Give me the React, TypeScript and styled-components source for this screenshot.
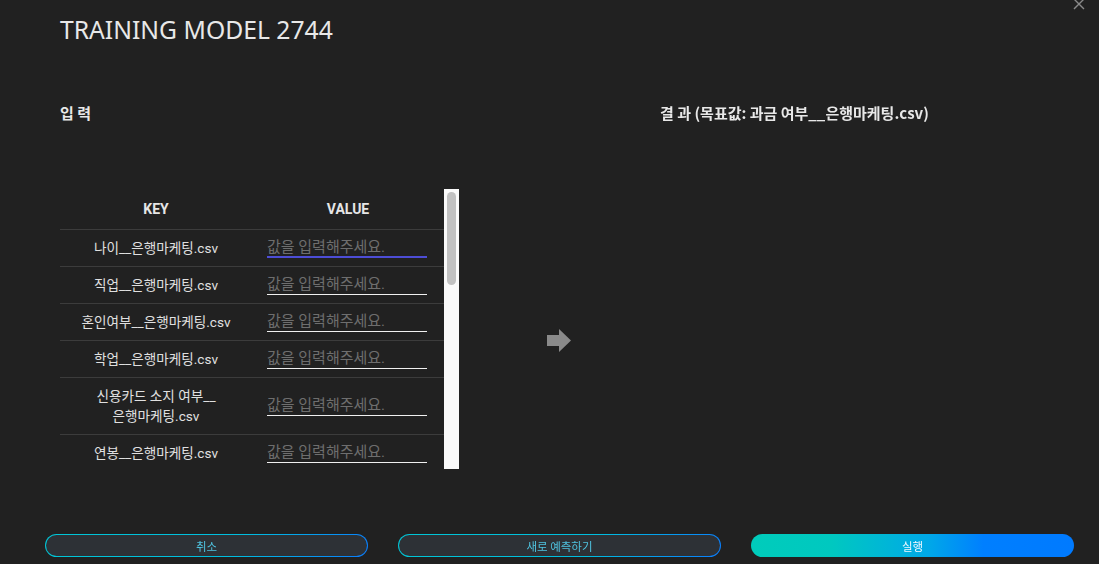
import React from "react";
import styled, { createGlobalStyle } from "styled-components";

const GlobalStyle = createGlobalStyle`
  html, body { margin: 0; padding: 0; background: #212121; }
  body { font-family: "Noto Sans", "Noto Sans CJK KR", sans-serif; color: #e6e6e6; }
  * { box-sizing: border-box; }
`;

const Modal = styled.div`
  position: relative;
  width: 1099px;
  height: 564px;
  background: #212121;
  display: flex;
  flex-direction: column;
  overflow: hidden;
`;

const CloseButton = styled.button`
  position: absolute;
  top: -3px;
  right: 13px;
  width: 14px;
  height: 14px;
  padding: 0;
  border: none;
  background: transparent;
  display: flex;
  align-items: center;
  justify-content: center;
`;

const Title = styled.h1`
  margin: 13px 0 0 60px;
  font-family: "Noto Sans", "Noto Sans CJK KR", sans-serif;
  font-weight: 400;
  font-size: 24.7px;
  line-height: 34px;
  color: #e8e8e8;
`;

const Body = styled.div`
  display: grid;
  grid-template-columns: 399px 201px 1fr;
  align-items: start;
  padding-left: 60px;
  margin-top: 55px;
`;

const Column = styled.div`
  display: flex;
  flex-direction: column;
`;

const SectionTitle = styled.h2`
  margin: 0;
  font-family: "Noto Sans CJK KR", sans-serif;
  font-weight: 700;
  font-size: 15px;
  line-height: 22px;
  color: #e8e8e8;
  white-space: nowrap;
`;

const TableFrame = styled.div`
  margin-top: 65px;
  height: 280px;
  display: flex;
`;

const TableViewport = styled.div`
  flex: 1;
  min-width: 0;
  overflow: hidden;
`;

const ScrollTrack = styled.div`
  width: 15px;
  flex: none;
  background: #fafafa;
  padding: 3px;
`;

const ScrollThumb = styled.div`
  height: 93px;
  border-radius: 5px;
  background: #c1c1c1;
`;

const Table = styled.table`
  width: 100%;
  border-collapse: collapse;
  font-family: "Roboto", "Noto Sans CJK KR", sans-serif;
`;

const HeadCell = styled.th`
  height: 40px;
  padding: 0;
  font-size: 14px;
  font-weight: 700;
  color: #e6e6e6;
  text-align: center;
  width: 50%;
  border-bottom: 1px solid #3c3c3c;
`;

const Row = styled.tr`
  border-bottom: 1px solid #3c3c3c;
`;

const KeyCell = styled.td`
  height: 37px;
  padding: 8px 10px;
  font-size: 13.6px;
  line-height: 20px;
  color: #e0e0e0;
  text-align: center;
  white-space: pre-line;
`;

const ValueCell = styled.td`
  padding: 0 15px;
  vertical-align: middle;
`;

const ValueInput = styled.input<{ $active?: boolean }>`
  display: block;
  width: 160px;
  height: 24px;
  margin-top: -3px;
  padding: 3px 0 0;
  border: none;
  border-bottom: ${(p) => (p.$active ? "2px solid #4d4dd6" : "1px solid #f0f0f0")};
  background: transparent;
  color: #e6e6e6;
  font-family: "Roboto", "Noto Sans CJK KR", sans-serif;
  font-size: 15px;
  outline: none;
  caret-color: #e6e6e6;
  &::placeholder { color: #6e6e6e; }
`;

const ArrowCell = styled.div`
  display: flex;
  padding-left: 88px;
  padding-top: 227px;
`;

const Footer = styled.div`
  margin-top: auto;
  margin-bottom: 7px;
  padding: 0 25px 0 45px;
  display: grid;
  grid-template-columns: repeat(3, 323px);
  column-gap: 30px;
`;

const OutlineButton = styled.button`
  height: 23px;
  border-radius: 12px;
  border: 1px solid transparent;
  background:
    linear-gradient(#2d3136, #2d3136) padding-box,
    linear-gradient(120deg, #00c6d6 0%, #00bde0 60%, #0a7dff 100%) border-box;
  color: #4fc3e0;
  font-family: "Noto Sans CJK KR", sans-serif;
  font-size: 11.5px;
  padding: 0;
  display: flex;
  align-items: center;
  justify-content: center;
`;

const PrimaryButton = styled.button`
  height: 23px;
  border-radius: 12px;
  border: none;
  background: linear-gradient(90deg, #00ccbb 0%, #00c8c0 25%, #00a8e8 55%, #007fff 72%, #007aff 100%);
  color: #f0f8ff;
  font-family: "Noto Sans CJK KR", sans-serif;
  font-size: 11.5px;
  padding: 0;
  display: flex;
  align-items: center;
  justify-content: center;
`;

const keys = [
  "나이__은행마케팅.csv",
  "직업__은행마케팅.csv",
  "혼인여부__은행마케팅.csv",
  "학업__은행마케팅.csv",
  "신용카드 소지 여부__\n은행마케팅.csv",
  "연봉__은행마케팅.csv",
];

export default function App() {
  return (
    <>
      <GlobalStyle />
      <Modal>
        <CloseButton aria-label="close">
          <svg width="12" height="12" viewBox="0 0 12 12">
            <path d="M1 1 L11 11 M11 1 L1 11" stroke="#8a8a8a" strokeWidth="1.4" />
          </svg>
        </CloseButton>
        <Title>TRAINING MODEL 2744</Title>
        <Body>
          <Column>
            <SectionTitle>입 력</SectionTitle>
            <TableFrame>
              <TableViewport>
                <Table>
                  <thead>
                    <tr>
                      <HeadCell>KEY</HeadCell>
                      <HeadCell>VALUE</HeadCell>
                    </tr>
                  </thead>
                  <tbody>
                    {keys.map((k, i) => (
                      <Row key={k}>
                        <KeyCell>{k}</KeyCell>
                        <ValueCell>
                          <ValueInput placeholder="값을 입력해주세요." $active={i === 0} autoFocus={i === 0} />
                        </ValueCell>
                      </Row>
                    ))}
                  </tbody>
                </Table>
              </TableViewport>
              <ScrollTrack>
                <ScrollThumb />
              </ScrollTrack>
            </TableFrame>
          </Column>
          <ArrowCell>
            <svg width="24" height="24" viewBox="0 0 24 24">
              <path d="M0 6 H12 V0 L24 11.5 L12 23 V17 H0 Z" fill="#8a8a8a" />
            </svg>
          </ArrowCell>
          <Column>
            <SectionTitle>결 과 (목표값: 과금 여부__은행마케팅.csv)</SectionTitle>
          </Column>
        </Body>
        <Footer>
          <OutlineButton>취소</OutlineButton>
          <OutlineButton>새로 예측하기</OutlineButton>
          <PrimaryButton>실행</PrimaryButton>
        </Footer>
      </Modal>
    </>
  );
}
